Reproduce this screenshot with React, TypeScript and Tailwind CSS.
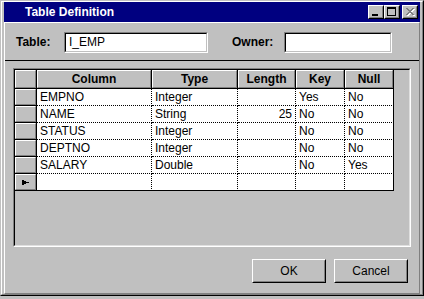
import type { ReactNode } from 'react'

const columns = [
  { key: 'column', label: 'Column', w: 'w-[115px]' },
  { key: 'type', label: 'Type', w: 'w-[86px]' },
  { key: 'length', label: 'Length', w: 'w-[58px]' },
  { key: 'key', label: 'Key', w: 'w-[49px]' },
  { key: 'null', label: 'Null', w: 'w-[49px]' },
]

const rows = [
  { column: 'EMPNO', type: 'Integer', length: '', key: 'Yes', null: 'No' },
  { column: 'NAME', type: 'String', length: '25', key: 'No', null: 'No' },
  { column: 'STATUS', type: 'Integer', length: '', key: 'No', null: 'No' },
  { column: 'DEPTNO', type: 'Integer', length: '', key: 'No', null: 'No' },
  { column: 'SALARY', type: 'Double', length: '', key: 'No', null: 'Yes' },
  { column: '', type: '', length: '', key: '', null: '' },
]

// raised 3d edge used by header cells and the row selector
function Bevel({ children, className = '' }: { children?: ReactNode; className?: string }) {
  return (
    <div
      className={`h-full border border-t-white border-l-white border-r-[#808080] border-b-[#808080] bg-[#c0c0c0] ${className}`}
    >
      {children}
    </div>
  )
}

function Button({ label }: { label: string }) {
  return (
    <div className="w-[74px] h-[24px] border border-t-white border-l-white border-r-black border-b-black">
      <div className="h-full border border-t-[#c0c0c0] border-l-[#c0c0c0] border-r-[#808080] border-b-[#808080] flex items-center justify-center text-[12px]">
        {label}
      </div>
    </div>
  )
}

function CaptionButton({ children }: { children: ReactNode }) {
  return (
    <div className="w-[16px] h-[14px] border border-t-white border-l-white border-r-black border-b-black">
      <div className="h-full border border-t-[#c0c0c0] border-l-[#c0c0c0] border-r-[#808080] border-b-[#808080] bg-[#c0c0c0]">
        {children}
      </div>
    </div>
  )
}

function TextBox({ value, className }: { value?: string; className: string }) {
  return (
    <div className={`h-[21px] border border-t-[#808080] border-l-[#808080] border-r-white border-b-white ${className}`}>
      <div className="h-full border border-t-black border-l-black border-r-[#c0c0c0] border-b-[#c0c0c0] bg-white flex items-center pl-[3px] text-[12px]">
        {value}
      </div>
    </div>
  )
}

export default function App() {
  return (
    <div className="w-[424px] h-[299px] bg-[#c0c0c0] text-black font-['Liberation_Sans',Arial,sans-serif]">
      <div className="w-[424px] h-[296px] border border-t-[#c0c0c0] border-l-[#c0c0c0] border-r-black border-b-black">
        <div className="h-full flex flex-col px-[2px] border border-t-white border-l-white border-r-[#808080] border-b-[#808080]">
          {/* Title bar */}
          <div className="h-[20px] bg-[#000080] flex items-center pl-[21px] pr-[2px]">
            <span className="text-white font-bold text-[12px] flex-1">Table Definition</span>
            <div className="flex">
              <CaptionButton>
                <svg width="12" height="10" viewBox="0 0 12 10" shapeRendering="crispEdges">
                  <rect x="2" y="7" width="6" height="2" fill="#000" />
                </svg>
              </CaptionButton>
              <CaptionButton>
                <svg width="12" height="10" viewBox="0 0 12 10" shapeRendering="crispEdges">
                  <rect x="1" y="0" width="9" height="2" fill="#000" />
                  <rect x="1" y="0" width="1" height="9" fill="#000" />
                  <rect x="9" y="0" width="1" height="9" fill="#000" />
                  <rect x="1" y="8" width="9" height="1" fill="#000" />
                </svg>
              </CaptionButton>
            </div>
            <div className="ml-[2px]">
              <CaptionButton>
                <svg width="12" height="10" viewBox="0 0 12 10" shapeRendering="crispEdges">
                  {[0, 1, 2, 3, 4, 5, 6].map((i) => (
                    <g key={i}>
                      <rect x={3 + i} y={2 + i} width="2" height="1" fill="#fff" />
                      <rect x={9 - i} y={2 + i} width="2" height="1" fill="#fff" />
                    </g>
                  ))}
                  {[0, 1, 2, 3, 4, 5, 6].map((i) => (
                    <g key={i}>
                      <rect x={2 + i} y={1 + i} width="2" height="1" fill="#808080" />
                      <rect x={8 - i} y={1 + i} width="2" height="1" fill="#808080" />
                    </g>
                  ))}
                </svg>
              </CaptionButton>
            </div>
          </div>

          {/* Client area */}
          <div className="flex-1 flex flex-col border border-t-white border-l-white border-r-[#808080] border-b-[#808080]">
            <div className="h-[37px] flex items-center pl-[11px] pt-[1px] text-[12px] font-bold">
              <span className="w-[48px]">Table:</span>
              <TextBox value="I_EMP" className="w-[144px] font-normal" />
              <span className="w-[52px] ml-[24px]">Owner:</span>
              <TextBox className="w-[108px] font-normal" />
            </div>

            <div className="flex-1 flex flex-col border-t border-black">
              {/* Grid */}
              <div className="ml-[8px] mt-[7px] w-[398px] h-[179px] border border-t-[#808080] border-l-[#808080] border-r-white border-b-white">
                <div className="h-full border border-t-black border-l-black border-r-[#dfdfdf] border-b-[#dfdfdf] bg-[#c0c0c0] text-[12px]">
                  <div className="flex h-[19px]">
                    <div className="w-[22px] border-r border-b border-black">
                      <Bevel />
                    </div>
                    {columns.map((c) => (
                      <div key={c.key} className={`${c.w} border-r border-b border-black`}>
                        <Bevel className="flex items-center justify-center font-bold pb-[1px]">{c.label}</Bevel>
                      </div>
                    ))}
                  </div>
                  {rows.map((r, ri) => {
                    const lastRow = ri === rows.length - 1
                    return (
                      <div key={ri} className="flex h-[17px]">
                        <div className="w-[22px] border-r border-b border-black">
                          <Bevel className="flex items-center justify-center">
                            {lastRow && (
                              <svg width="7" height="5" viewBox="0 0 7 5" shapeRendering="crispEdges">
                                <rect x="0" y="0" width="2" height="5" fill="#000" />
                                <rect x="2" y="1" width="2" height="3" fill="#000" />
                                <rect x="4" y="2" width="3" height="1" fill="#000" />
                              </svg>
                            )}
                          </Bevel>
                        </div>
                        {columns.map((c, ci) => {
                          const lastCol = ci === columns.length - 1
                          const value = r[c.key as keyof typeof r]
                          return (
                            <div
                              key={c.key}
                              className={`${c.w} bg-white border-r border-b border-black flex items-center leading-[16px] ${
                                lastRow ? '' : '[border-bottom-style:dotted]'
                              } ${lastCol ? '' : '[border-right-style:dotted]'} ${
                                c.key === 'length' ? 'justify-end pr-[3px]' : 'pl-[3px]'
                              }`}
                            >
                              {value}
                            </div>
                          )
                        })}
                      </div>
                    )
                  })}
                </div>
              </div>

              {/* Buttons */}
              <div className="flex justify-end gap-[8px] mt-[12px] pr-[11px]">
                <Button label="OK" />
                <Button label="Cancel" />
              </div>
            </div>
          </div>
        </div>
      </div>
    </div>
  )
}
